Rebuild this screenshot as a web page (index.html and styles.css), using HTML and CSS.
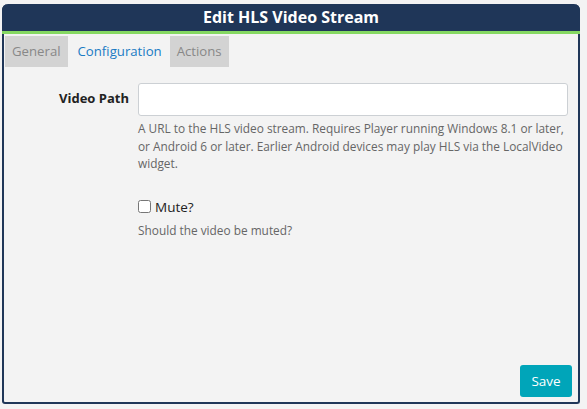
FILE: index.html
```html
<!DOCTYPE html>
<html>
<head>
<meta charset="utf-8">
<link rel="stylesheet" href="styles.css">
</head>
<body>
<div class="modal">
  <div class="modal-header">Edit HLS Video Stream</div>
  <div class="modal-body">
    <div class="tabs">
      <div class="tab">General</div>
      <div class="tab active">Configuration</div>
      <div class="tab">Actions</div>
    </div>
    <div class="form">
      <div class="row">
        <label class="label">Video Path</label>
        <div class="field">
          <input class="input" type="text">
          <div class="help">A URL to the HLS video stream. Requires Player running Windows 8.1 or later, or Android 6 or later. Earlier Android devices may play HLS via the LocalVideo widget.</div>
        </div>
      </div>
      <div class="row row-check">
        <div class="label"></div>
        <div class="field">
          <label class="check"><input type="checkbox" class="checkbox"> Mute?</label>
          <div class="help">Should the video be muted?</div>
        </div>
      </div>
    </div>
  </div>
  <div class="modal-footer">
    <button class="btn-save">Save</button>
  </div>
</div>
</body>
</html>
```
FILE: styles.css
```css
* { box-sizing: border-box; }
html, body {
  margin: 0;
  padding: 0;
  background: #f3f3f3;
  font-family: "Open Sans", "Liberation Sans", sans-serif;
}
.modal {
  margin: 4px 0 0 2px;
  width: 578px;
  height: 400px;
  border: 2px solid #1f3658;
  border-top: 0;
  border-radius: 6px 6px 3px 3px;
  background: #f3f3f3;
  display: flex;
  flex-direction: column;
}
.modal-header {
  background: #1f3658;
  color: #fff;
  font-weight: 700;
  font-size: 16px;
  height: 30px;
  line-height: 27px;
  text-align: center;
  border-bottom: 3px solid #85d862;
  border-radius: 6px 6px 0 0;
  margin: 0 -2px;
}
.modal-body {
  flex: 1;
}
.tabs {
  display: flex;
  margin: 2px 0 0 1px;
}
.tab {
  height: 31px;
  line-height: 31px;
  padding: 0 7px;
  font-size: 13.2px;
  color: #888;
  background: #d3d3d3;
}
.tab.active {
  background: transparent;
  color: #1a7bc4;
  padding: 0 8px 0 10px;
}
.form {
  padding-top: 16px;
}
.row {
  display: flex;
}
.label {
  width: 125px;
  flex: none;
  text-align: right;
  font-weight: 700;
  font-size: 13px;
  color: #222;
  padding-top: 6px;
}
.field {
  margin-left: 9px;
  width: 430px;
}
.input {
  display: block;
  width: 430px;
  height: 33px;
  border: 1px solid #ccd0d4;
  border-radius: 3px;
  background: #fff;
}
.help {
  font-size: 11.85px;
  line-height: 17.5px;
  color: #666;
  margin-top: 4px;
}
.row-check {
  margin-top: 24px;
}
.check {
  display: flex;
  align-items: center;
  font-size: 13.5px;
  color: #222;
  height: 20px;
}
.checkbox {
  margin: 0 4px 0 0;
  width: 13px;
  height: 13px;
}
.row-check .help {
  margin-top: 5px;
}
.modal-footer {
  display: flex;
  justify-content: flex-end;
  padding: 0 6px 5px 0;
}
.btn-save {
  width: 52px;
  height: 32px;
  border: 0;
  border-radius: 3px;
  background: #00a5b9;
  color: #fff;
  font-family: "Open Sans", "Liberation Sans", sans-serif;
  font-size: 13.5px;
}
```
